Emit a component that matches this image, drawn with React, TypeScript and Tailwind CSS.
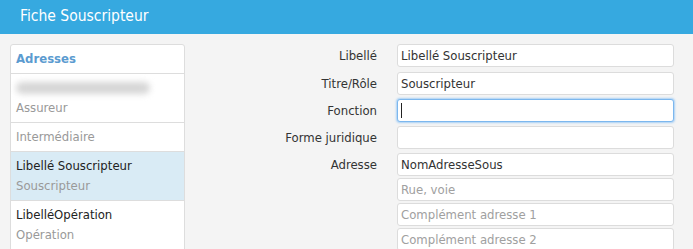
const font = "font-['DejaVu_Sans_Condensed','DejaVu_Sans',sans-serif]";

const parties = [
  { title: null, sub: "Assureur" },
  { title: null, sub: "Intermédiaire", single: true },
  { title: "Libellé Souscripteur", sub: "Souscripteur", active: true },
  { title: "LibelléOpération", sub: "Opération" },
];

function Field({ value, placeholder, focused }: { value?: string; placeholder?: string; focused?: boolean }) {
  return (
    <div
      className={
        "w-[277px] h-[23px] rounded-[3px] bg-white border px-[3px] flex items-center text-[13px] " +
        (focused
          ? "border-[#7cb7ee] shadow-[0_0_2px_1px_#a9d0f5]"
          : "border-[#dcdcdc]")
      }
    >
      {focused ? (
        <span className="w-px h-[15px] bg-[#222]" />
      ) : value ? (
        <span className="text-[#333]">{value}</span>
      ) : (
        <span className="text-[#a0a0a0]">{placeholder}</span>
      )}
    </div>
  );
}

function Row({ label, children, gap = "mb-1" }: { label?: string; children: React.ReactNode; gap?: string }) {
  return (
    <div className={"flex items-center " + gap}>
      <div className="w-[212px] pr-[20px] text-right text-[13px] text-[#333]">{label}</div>
      {children}
    </div>
  );
}

export default function App() {
  return (
    <div className={"w-[693px] h-[249px] bg-[#f4f4f4] overflow-hidden " + font}>
      <div className="h-[34px] bg-[#36a9e0] flex items-center px-5 text-white text-[15.5px]">
        Fiche Souscripteur
      </div>

      <div className="flex pt-[10px] pl-[10px]">
        <div className="w-[175px] bg-white border border-[#dddddd] rounded-t-[3px] text-[13px] leading-5">
          <div className="px-[5px] py-1 font-bold text-[#5b9bd0]">Adresses</div>
          {parties.map((p) => (
            <div
              key={p.sub}
              className={"border-t border-[#dddddd] px-[5px] py-1 " + (p.active ? "bg-[#d9ebf5]" : "")}
            >
              {p.single ? (
                <div className="text-[#999]">{p.sub}</div>
              ) : (
                <>
                  {p.title ? (
                    <div className="text-[#222]">{p.title}</div>
                  ) : (
                    <div className="h-5 flex items-center">
                      <div className="w-[134px] h-[12px] rounded-full bg-[#d6d6d6] blur-[3px]" />
                    </div>
                  )}
                  <div className="text-[#999]">{p.sub}</div>
                </>
              )}
            </div>
          ))}
        </div>

        <div className="flex flex-col">
          <Row label="Libellé" gap="mb-[5px]">
            <Field value="Libellé Souscripteur" />
          </Row>
          <Row label="Titre/Rôle">
            <Field value="Souscripteur" />
          </Row>
          <Row label="Fonction">
            <Field focused />
          </Row>
          <Row label="Forme juridique">
            <Field />
          </Row>
          <Row label="Adresse" gap="mb-[2px]">
            <Field value="NomAdresseSous" />
          </Row>
          <Row gap="mb-[2px]">
            <Field placeholder="Rue, voie" />
          </Row>
          <Row gap="mb-[2px]">
            <Field placeholder="Complément adresse 1" />
          </Row>
          <Row gap="mb-[2px]">
            <Field placeholder="Complément adresse 2" />
          </Row>
        </div>
      </div>
    </div>
  );
}
